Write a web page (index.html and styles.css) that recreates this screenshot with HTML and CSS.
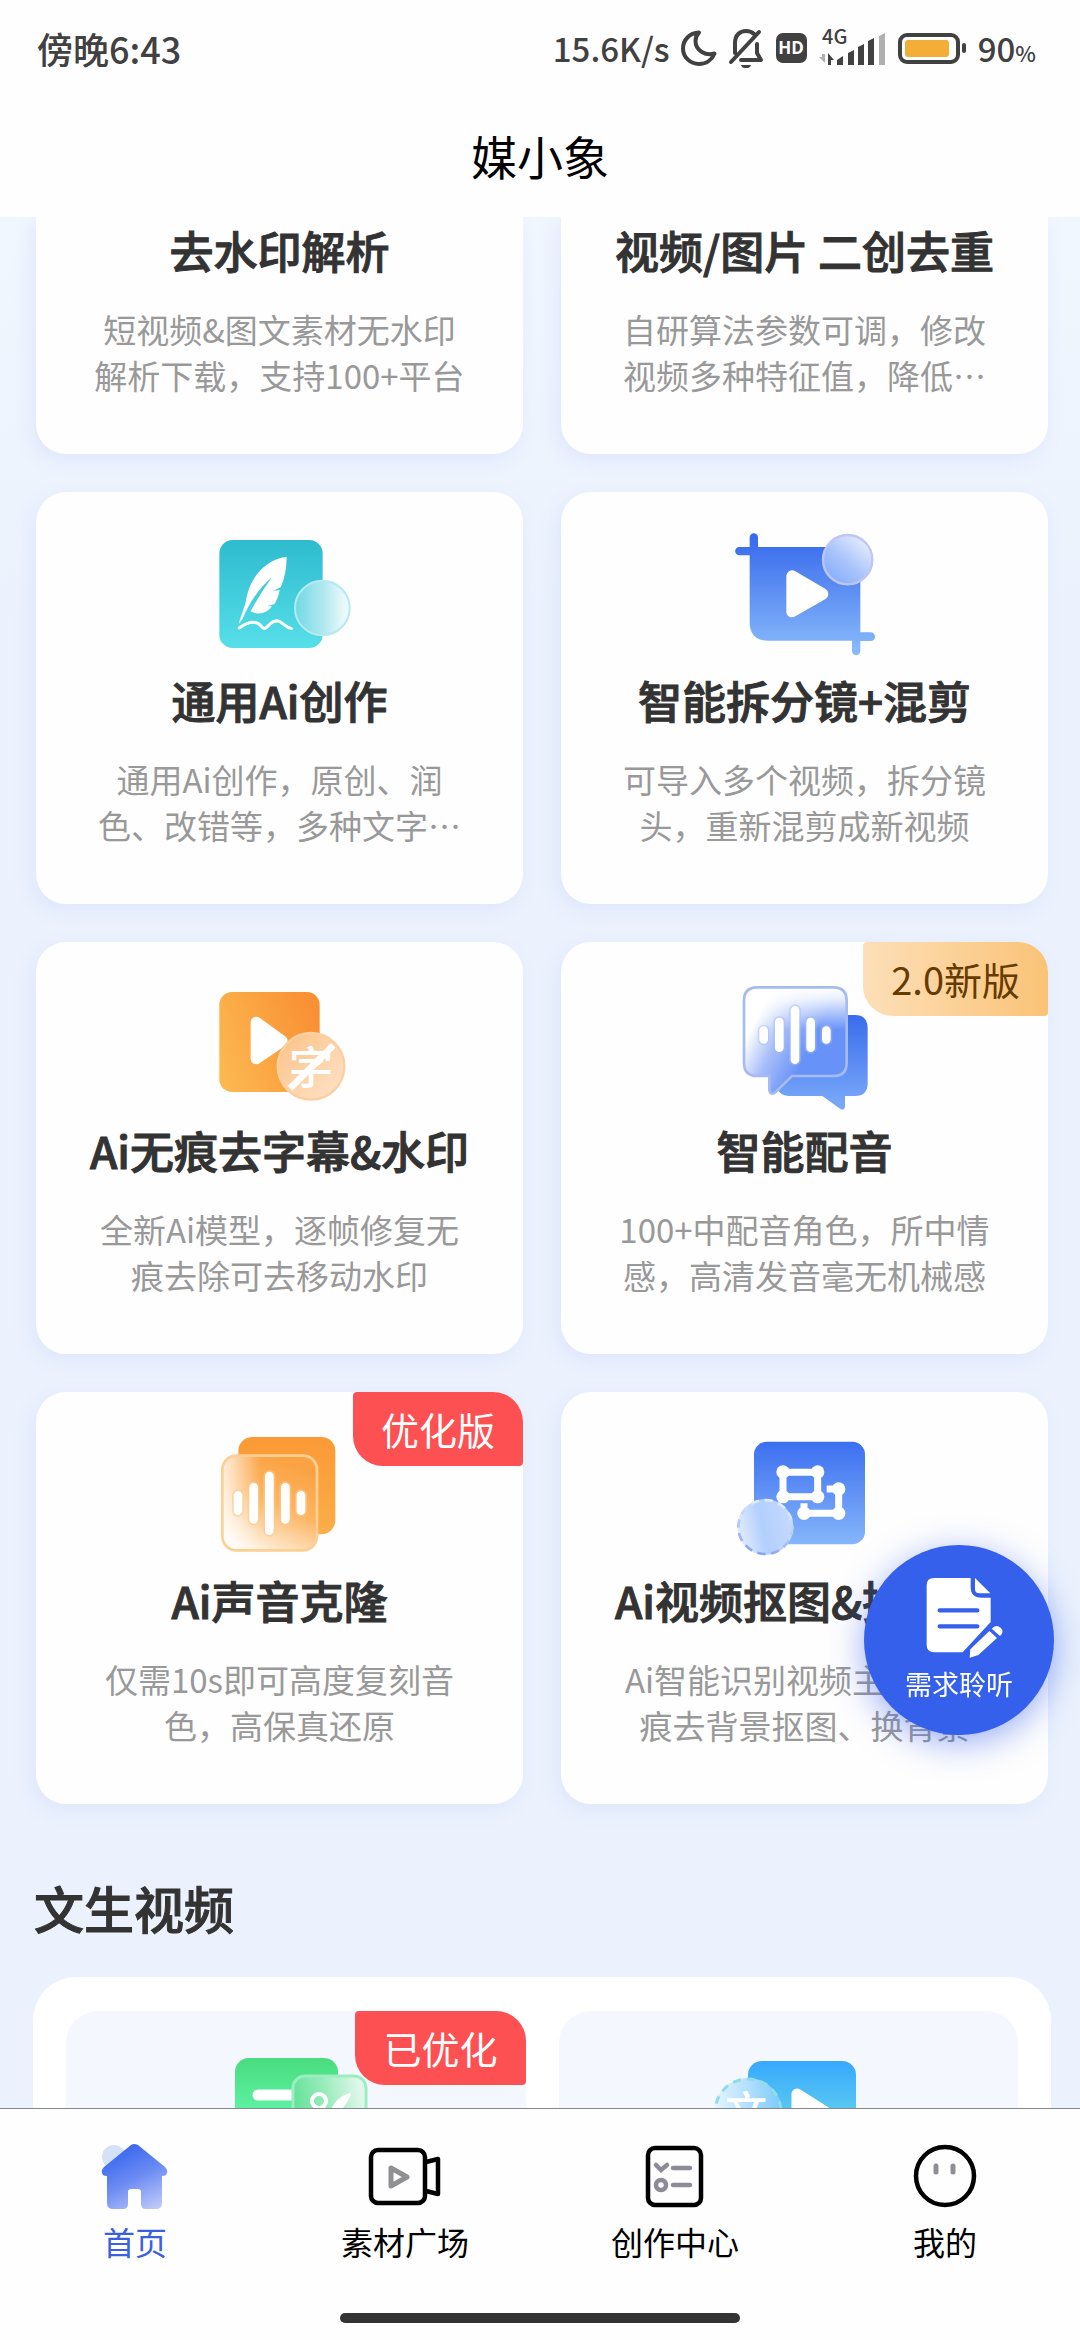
FILE: index.html
```html
<!DOCTYPE html>
<html lang="zh-CN">
<head>
    <meta charset="utf-8">
    <meta name="viewport" content="width=device-width">
    <title>媒小象</title>
    <link rel="stylesheet" href="styles.css">
</head>
<body>
    <div class="status-bar">
        <span class="status-time">傍晚6:43</span>
        <div class="status-right">
            <span>15.6K/s</span>
            <svg width="34" height="36" viewBox="1 0 34 36" fill="none" stroke="#414141" stroke-width="4" stroke-linejoin="round"><path d="M18 2.500C8.500 3 2 10 2 18.500C2 27 9 34 18 34C25 34 31 30 33.500 23.500C25 26 14.500 21 14.500 11C14.500 8 15.500 5 18 2.500Z"/></svg>
            <svg width="36" height="40" viewBox="0 0 36 40" fill="none" stroke="#414141" stroke-width="4" stroke-linejoin="round" stroke-linecap="round"><path d="M7 25V15C7 7 12 3 18 3C21 3 24 4 26 6M29 16V25L33 32H13M3 34L31 4"/><path d="M13 37h10c-1 3-3 3-5 3s-4 0-5-3Z" fill="#414141" stroke="none"/></svg>
            <svg width="31" height="30" viewBox="0 0 31 30"><rect width="31" height="30" rx="7" fill="#414141"/><text x="15" y="21" class="hd-text" text-anchor="middle">HD</text></svg>
            <svg width="67" height="38" viewBox="0 0 67 38" fill="#414141">
                <text x="3" y="15" class="net-text">4G</text>
                <path d="M3 25h3v9L0 28h3Z" fill="#b0b0b0"/>
                <path d="M9 36V24l6 7h-3v5ZM18 31l6-4v9h-6ZM29 24l6-3v15h-6ZM39 18l6-3v21h-6ZM49 12l6-3v27h-6Z"/>
                <path d="M60 7l6-3v32h-6Z" fill="#b0b0b0"/>
            </svg>
            <svg width="68" height="31" viewBox="0 0 68 31"><rect x="2" y="2" width="58" height="27" rx="7" fill="none" stroke="#414141" stroke-width="4"/><rect x="7" y="7" width="44" height="17" rx="3" fill="#f3ae38"/><rect x="64" y="10" width="4" height="10" rx="2" fill="#414141"/></svg>
            <span>90<small>%</small></span>
        </div>
    </div>
    <header class="page-header">
        <h1>媒小象</h1>
    </header>

    <main>
        <section class="tools">
            <a href="#" class="card card-cut">
                <h2>去水印解析</h2>
                <p>短视频&amp;图文素材无水印解析下载，支持100+平台</p>
            </a>
            <a href="#" class="card card-cut">
                <h2>视频/图片 二创去重</h2>
                <p>自研算法参数可调，修改视频多种特征值，降低…</p>
            </a>

            <a href="#" class="card">
                <svg class="icon" viewBox="75 81 450 390">
                    <defs>
                        <linearGradient id="teal" x1="0" y1="0" x2="0" y2="1"><stop offset="0" stop-color="#2ebbcf"/><stop offset="1" stop-color="#56dfe9"/></linearGradient>
                        <linearGradient id="tealGlass"><stop offset="0" stop-color="#6fd9e4"/><stop offset=".55" stop-color="#b5e9f0"/><stop offset="1" stop-color="#f8fdfe"/></linearGradient>
                    </defs>
                    <rect x="118" y="120" width="310" height="324" rx="40" fill="url(#teal)"/>
                    <path d="M320 170C260 178 215 225 200 290C196 320 184 340 176 372L188 356C205 315 235 265 276 232C245 275 228 305 212 334C236 348 262 338 276 319L262 318L284 312C290 300 296 288 299 270L278 273L302 262C314 235 320 205 320 170Z" fill="#fff"/>
                    <path d="M178 384C195 372 216 362 234 370C246 376 248 394 262 380C276 364 290 356 304 368C314 377 322 382 334 386" fill="none" stroke="#fff" stroke-width="9" stroke-linecap="round"/>
                    <circle cx="427" cy="324" r="82" fill="url(#tealGlass)" stroke="#b4eaf1" stroke-width="6"/>
                </svg>
                <h2>通用Ai创作</h2>
                <p>通用Ai创作，原创、润色、改错等，多种文字…</p>
            </a>
            <a href="#" class="card">
                <svg class="icon" viewBox="90 81 450 390">
                    <defs>
                        <linearGradient id="blue" x1="0" y1="0" x2="0" y2="1"><stop offset="0" stop-color="#3c6ff0"/><stop offset="1" stop-color="#86b6fb"/></linearGradient>
                        <linearGradient id="crop" gradientUnits="userSpaceOnUse" x1="0" y1="100" x2="0" y2="465"><stop offset="0" stop-color="#3567ec"/><stop offset="1" stop-color="#8abcfb"/></linearGradient>
                        <linearGradient id="blueGlass" x1=".2" y1=".8" x2=".8" y2=".1"><stop offset="0" stop-color="#8fb3fb"/><stop offset=".4" stop-color="#a9c4fc"/><stop offset="1" stop-color="#e2eafd"/></linearGradient>
                    </defs>
                    <path d="M149 112a12 12 0 0 1 25 0V141H481V397H512a12 12 0 0 1 0 26H481V453a12 12 0 0 1-25 0V422H205Q149 422 149 366V166H118a12 12 0 0 1 0-25H149Z" fill="url(#crop)"/>
                    <path d="M276 228V335L368 282Z" fill="#fff" stroke="#fff" stroke-width="34" stroke-linejoin="round"/>
                    <circle cx="443" cy="179" r="74" fill="url(#blueGlass)" stroke="#bdc6f6" stroke-width="7"/>
                </svg>
                <h2>智能拆分镜+混剪</h2>
                <p>可导入多个视频，拆分镜头，重新混剪成新视频</p>
            </a>

            <a href="#" class="card">
                <svg class="icon" viewBox="75 51 450 390">
                    <defs>
                        <linearGradient id="orange" x1="0" y1=".7" x2="1" y2=".3"><stop offset="0" stop-color="#fcb750"/><stop offset="1" stop-color="#f99033"/></linearGradient>
                        <linearGradient id="peach" x1="0" y1="0" x2="1" y2="1"><stop offset="0" stop-color="#fbc285"/><stop offset="1" stop-color="#fee3cb"/></linearGradient>
                    </defs>
                    <rect x="118" y="96" width="301" height="300" rx="38" fill="url(#orange)"/>
                    <path d="M229 187V296L306 243Z" fill="#fff" stroke="#fff" stroke-width="34" stroke-linejoin="round"/>
                    <circle cx="393" cy="319" r="100" fill="url(#peach)" stroke="#fbcfa0" stroke-width="7"/>
                    <text x="393" y="371" class="icon-char" font-size="134" text-anchor="middle">字</text>
                    <path d="M330 385L460 256" stroke="#fff" stroke-width="20"/>
                </svg>
                <h2>Ai无痕去字幕&amp;水印</h2>
                <p>全新Ai模型，逐帧修复无痕去除可去移动水印</p>
            </a>
            <a href="#" class="card">
                <span class="badge badge-gold">2.0新版</span>
                <svg class="icon" viewBox="90 141 450 390">
                    <defs>
                        <linearGradient id="bubble" x1="0" y1="0" x2="0" y2="1"><stop offset="0" stop-color="#3a6cec"/><stop offset="1" stop-color="#7cabf9"/></linearGradient>
                        <linearGradient id="fadeBlue" gradientUnits="userSpaceOnUse" x1="175" y1="250" x2="340" y2="330"><stop offset="0" stop-color="#fff"/><stop offset=".45" stop-color="#a9bff9"/><stop offset="1" stop-color="#6792f7"/></linearGradient>
                        <linearGradient id="fadeTop" gradientUnits="userSpaceOnUse" x1="0" y1="175" x2="0" y2="300"><stop offset="0" stop-color="#fff"/><stop offset=".25" stop-color="#fff" stop-opacity=".85"/><stop offset="1" stop-color="#fff" stop-opacity="0"/></linearGradient>
                    </defs>
                    <path d="M270 255H465Q503 255 503 295V460Q503 498 465 498H435V530Q433 544 420 536L367 498H265Q240 496 230 475Z" fill="url(#bubble)"/>
                    <path d="M172 172H400Q440 172 440 212V398Q440 438 400 438H276L225 488Q210 496 208 480V438H172Q132 438 132 398V212Q132 172 172 172Z" fill="url(#fadeBlue)"/>
                    <path d="M172 172H400Q440 172 440 212V398Q440 438 400 438H276L225 488Q210 496 208 480V438H172Q132 438 132 398V212Q132 172 172 172Z" fill="url(#fadeTop)" stroke="#a5bbf1" stroke-width="8"/>
                    <g fill="none" stroke-linecap="round">
                        <path d="M191 302V328M238 276V353M285 241V389M332 276V353M379 302V328" stroke="#a8bbf6" stroke-width="36" opacity=".45"/>
                        <path d="M191 302V328M238 276V353M285 241V389M332 276V353M379 302V328" stroke="#fff" stroke-width="26"/>
                    </g>
                </svg>
                <h2>智能配音</h2>
                <p>100+中配音角色，所中情感，高清发音毫无机械感</p>
            </a>

            <a href="#" class="card">
                <span class="badge">优化版</span>
                <svg class="icon" viewBox="75 141 450 390">
                    <defs>
                        <linearGradient id="amber" x1="0" y1="0" x2="0" y2="1"><stop offset="0" stop-color="#fb9a36"/><stop offset="1" stop-color="#fbae48"/></linearGradient>
                        <linearGradient id="amberGlass" x1=".75" y1=".1" x2=".35" y2="1"><stop offset="0" stop-color="#fba344"/><stop offset=".45" stop-color="#fcb562"/><stop offset="1" stop-color="#fef3e4"/></linearGradient>
                        <linearGradient id="amberEdge"><stop offset="0" stop-color="#fff" stop-opacity=".8"/><stop offset=".4" stop-color="#fff" stop-opacity="0"/></linearGradient>
                    </defs>
                    <rect x="175" y="171" width="291" height="292" rx="42" fill="url(#amber)"/>
                    <rect x="127" y="227" width="284" height="284" rx="42" fill="url(#amberGlass)"/>
                    <rect x="127" y="227" width="284" height="284" rx="42" fill="url(#amberEdge)" stroke="#fcd093" stroke-width="8"/>
                    <g fill="none" stroke-linecap="round">
                        <path d="M174 346V392M221 322V418M268 288V452M316 322V418M363 346V392" stroke="#fdc98c" stroke-width="36" opacity=".6"/>
                        <path d="M174 346V392M221 322V418M268 288V452M316 322V418M363 346V392" stroke="#fff" stroke-width="26"/>
                    </g>
                </svg>
                <h2>Ai声音克隆</h2>
                <p>仅需10s即可高度复刻音色，高保真还原</p>
            </a>
            <a href="#" class="card">
                <svg class="icon" viewBox="90 81 450 390">
                    <defs>
                        <linearGradient id="cutGlass" x1="0" y1=".6" x2="1" y2=".4"><stop offset="0" stop-color="#e3edfe"/><stop offset=".45" stop-color="#b3cffd"/><stop offset="1" stop-color="#c5dafd"/></linearGradient>
                        <linearGradient id="dash" x1="0" y1="1" x2=".3" y2="0"><stop offset="0" stop-color="#7f9bec"/><stop offset="1" stop-color="#e3ebfe"/></linearGradient>
                    </defs>
                    <rect x="162" y="125" width="333" height="308" rx="38" fill="url(#blue)"/>
                    <path d="M249 217H353V290H249ZM416 267V340H312V310M416 267H380" fill="none" stroke="#fff" stroke-width="21"/>
                    <g fill="#fff">
                        <circle cx="249" cy="216" r="20"/><circle cx="353" cy="216" r="20"/><circle cx="249" cy="290" r="20"/><circle cx="353" cy="290" r="20"/>
                        <circle cx="416" cy="267" r="20"/><circle cx="416" cy="340" r="20"/><circle cx="312" cy="340" r="20"/>
                    </g>
                    <circle cx="196" cy="381" r="84" fill="url(#cutGlass)"/>
                    <circle cx="196" cy="381" r="81" fill="none" stroke="url(#dash)" stroke-width="8" stroke-dasharray="25 17"/>
                </svg>
                <h2>Ai视频抠图&amp;换背景</h2>
                <p>Ai智能识别视频主体，无痕去背景抠图、换背景</p>
            </a>
        </section>

        <h2 class="section-title">文生视频</h2>
        <section class="panel">
            <a href="#" class="panel-item">
                <span class="badge">已优化</span>
                <svg class="icon" viewBox="0 0 150 130">
                    <defs>
                        <linearGradient id="green" x1="0" y1="0" x2="0" y2="1"><stop offset="0" stop-color="#49dc7e"/><stop offset=".5" stop-color="#5ef2a4"/><stop offset="1" stop-color="#6cf7b4"/></linearGradient>
                        <linearGradient id="greenGlass" x1="0" y1=".2" x2="1" y2="0"><stop offset="0" stop-color="#67e29a"/><stop offset=".4" stop-color="#97ebba"/><stop offset="1" stop-color="#effaf5"/></linearGradient>
                    </defs>
                    <rect x="14" y="12" width="103" height="108" rx="14" fill="url(#green)"/>
                    <path d="M37 49H80" stroke="#fff" stroke-width="11" stroke-linecap="round"/>
                    <rect x="72" y="30" width="73" height="76" rx="12" fill="url(#greenGlass)" stroke="#9beebf" stroke-width="3"/>
                    <circle cx="98" cy="55" r="7" fill="none" stroke="#fff" stroke-width="4"/>
                    <path d="M102 61L112 72M106 72L115 58Q119 52 128 49Q124 60 110 72" fill="#fff" stroke="#fff" stroke-width="3"/>
                </svg>
            </a>
            <a href="#" class="panel-item">
                <svg class="icon" viewBox="0 0 150 130">
                    <defs>
                        <linearGradient id="sky" x1="0" y1="0" x2="0" y2="1"><stop offset="0" stop-color="#37a8fe"/><stop offset=".45" stop-color="#57c7f0"/><stop offset="1" stop-color="#7fe5e5"/></linearGradient>
                        <linearGradient id="skyGlass"><stop offset="0" stop-color="#e6f6fe"/><stop offset="1" stop-color="#7cc9fb"/></linearGradient>
                    </defs>
                    <rect x="35" y="15" width="108" height="105" rx="14" fill="url(#sky)"/>
                    <path d="M84 48V95L122 72Z" fill="#fff" stroke="#fff" stroke-width="11" stroke-linejoin="round"/>
                    <circle cx="35" cy="66" r="34" fill="url(#skyGlass)"/>
                    <circle cx="35" cy="66" r="33" fill="none" stroke="#8fdde6" stroke-width="3" stroke-dasharray="8 6"/>
                    <text x="33" y="81" class="icon-char" font-size="42" text-anchor="middle">文</text>
                </svg>
            </a>
        </section>
    </main>

    <button type="button" class="feedback">
        <svg width="76" height="80" viewBox="663 533 228 240">
            <path d="M702 533H812V560Q812 592 845 592H872V665L788 756H702Q680 756 680 734V555Q680 533 702 533ZM825 533L871 579H838Q825 579 825 566Z" fill="#fff"/>
            <path d="M719 630H832M719 678H832" stroke="#3560ec" stroke-width="13" stroke-linecap="round"/>
            <path d="M868 692L891 713L835 764L809 772L811 747ZM875 685Q888 670 902 682Q914 694 900 707Z" fill="#fff"/>
        </svg>
        需求聆听
    </button>

    <nav class="tab-bar">
        <a href="#" class="active">
            <svg width="72" height="72" viewBox="0 0 72 72">
                <defs><linearGradient id="home" x1=".3" y1="0" x2=".8" y2="1"><stop offset="0" stop-color="#3463ee"/><stop offset=".5" stop-color="#6b8bf3"/><stop offset="1" stop-color="#bcc8f8"/></linearGradient></defs>
                <circle cx="15" cy="17" r="12" fill="#d5e1f8"/>
                <path d="M32 5Q35 3 39 5L66 27Q70 31 67 35Q66 36 63 36V63Q63 69 57 69H47Q42 69 42 64V52Q42 49 39 49H32Q29 49 29 52V64Q29 69 24 69H14Q8 69 8 63V36Q5 36 4 35Q1 31 5 27Z" fill="url(#home)"/>
            </svg>
            首页
        </a>
        <a href="#">
            <svg width="72" height="72" viewBox="0 0 72 72" fill="none" stroke="#000" stroke-width="4.500" stroke-linejoin="round"><rect x="2" y="10" width="54" height="53" rx="7"/><path d="M57 22L69 19V54L57 51"/><path d="M22 28V46L38 37Z" stroke="#909094" stroke-width="5"/></svg>
            素材广场
        </a>
        <a href="#">
            <svg width="72" height="72" viewBox="0 0 72 72" fill="none" stroke="#000" stroke-width="4.500"><rect x="9" y="8" width="53" height="57" rx="7"/><g stroke="#8d8b98" stroke-linecap="round"><path d="M17 25L22 30L28 25M34 28H51M34 45H51"/><circle cx="22" cy="45" r="5"/></g></svg>
            创作中心
        </a>
        <a href="#">
            <svg width="72" height="72" viewBox="0 0 72 72" fill="none" stroke="#000" stroke-width="4.500"><circle cx="36" cy="36" r="29"/><path d="M27 26V32M44 26V32" stroke="#8f8f93" stroke-width="5" stroke-linecap="round"/></svg>
            我的
        </a>
        <div class="home-indicator"></div>
    </nav>
</body>
</html>
```
FILE: styles.css
```css
* {
    box-sizing: border-box;
}

body {
    display: flex;
    flex-direction: column;
    height: 100vh;
    margin: 0;
    background: #fefefe;
    font-family: "Noto Sans CJK SC", "Noto Sans", sans-serif;
    color: #333;
}

h1, h2, p {
    margin: 0;
}

a {
    color: inherit;
    text-decoration: none;
}

svg {
    display: block;
    overflow: visible;
}

.status-bar {
    display: flex;
    justify-content: space-between;
    align-items: center;
    height: 96px;
    padding: 0 44px 0 37px;
    font-size: 33px;
    font-weight: 500;
    color: #414141;
}

.status-time {
    font-size: 36px;
}

.status-right {
    display: flex;
    align-items: center;
    gap: 12px;
}

.status-right small {
    font-size: 22px;
}

.hd-text {
    font: bold 17px "Open Sans", sans-serif;
    fill: #fff;
}

.net-text {
    font: 500 20px "Noto Sans CJK SC", sans-serif;
}

.page-header {
    height: 121px;
    padding-top: 25px;
    text-align: center;
}

.page-header h1 {
    font-size: 46px;
    font-weight: 400;
    line-height: 68px;
    color: #000;
}

main {
    flex: 1;
    min-height: 0;
    overflow: hidden;
    background: linear-gradient(#f1f7fe, #ebf2fd 400px);
}

/* tool cards */

.tools {
    display: grid;
    grid-template-columns: 1fr 1fr;
    gap: 38px;
    padding: 0 32px 0 36px;
}

.card {
    position: relative;
    padding: 35px 54px 56px;
    border-radius: 30px;
    background: #fefefe;
    box-shadow: -4px 6px 20px #dfe6fb;
    text-align: center;
}

.card-cut {
    padding-top: 3px;
    border-radius: 0 0 30px 30px;
}

.icon {
    width: 150px;
    height: 130px;
    margin: 0 auto 13px;
}

.icon-char {
    font-weight: 500;
    fill: #fff;
}

.card h2 {
    margin: 0 -30px 26px;
    font-size: 44px;
    font-weight: 500;
    line-height: 60px;
    white-space: nowrap;
    -webkit-text-stroke: 1px;
}

.card p {
    font-size: 33px;
    line-height: 46px;
    color: #999;
}

.badge {
    position: absolute;
    top: 0;
    right: 0;
    padding: 0 28px;
    border-radius: 4px 30px;
    background: #fc5052;
    font-size: 38px;
    line-height: 74px;
    color: #fff;
}

.badge-gold {
    background: linear-gradient(90deg, #fddfb8, #fac377);
    color: #663b00;
}

/* text to video */

.section-title {
    margin: 73px 34px 40px;
    font-size: 50px;
    font-weight: 500;
    line-height: 60px;
    -webkit-text-stroke: 1px;
}

.panel {
    display: grid;
    grid-template-columns: 1fr 1fr;
    gap: 33px;
    margin: 0 29px 0 33px;
    padding: 34px 33px;
    border-radius: 43px;
    background: #fff;
}

.panel-item {
    position: relative;
    padding-top: 35px;
    border-radius: 32px;
    background: #f4f7fd;
}

/* floating button */

.feedback {
    position: fixed;
    right: 26px;
    bottom: 605px;
    display: flex;
    flex-direction: column;
    align-items: center;
    gap: 8px;
    width: 190px;
    height: 190px;
    padding: 33px 0 0;
    border: 0;
    border-radius: 50%;
    background: #3560ec;
    box-shadow: 0 8px 34px rgba(53, 96, 236, .5);
    font: 27px/36px "Noto Sans CJK SC", sans-serif;
    color: #fff;
}

/* bottom tabs */

.tab-bar {
    display: grid;
    grid-template-columns: repeat(4, 1fr);
    padding: 31px 0 17px;
    border-top: 1px solid #85888f;
    background: #fefefe;
    font-size: 32px;
    line-height: 40px;
    color: #000;
}

.tab-bar a {
    display: flex;
    flex-direction: column;
    align-items: center;
    gap: 9px;
}

.tab-bar .active {
    color: #3a5fe0;
}

.home-indicator {
    grid-column: 1 / -1;
    justify-self: center;
    width: 37%;
    height: 10px;
    margin-top: 52px;
    border-radius: 5px;
    background: #333;
}
```
